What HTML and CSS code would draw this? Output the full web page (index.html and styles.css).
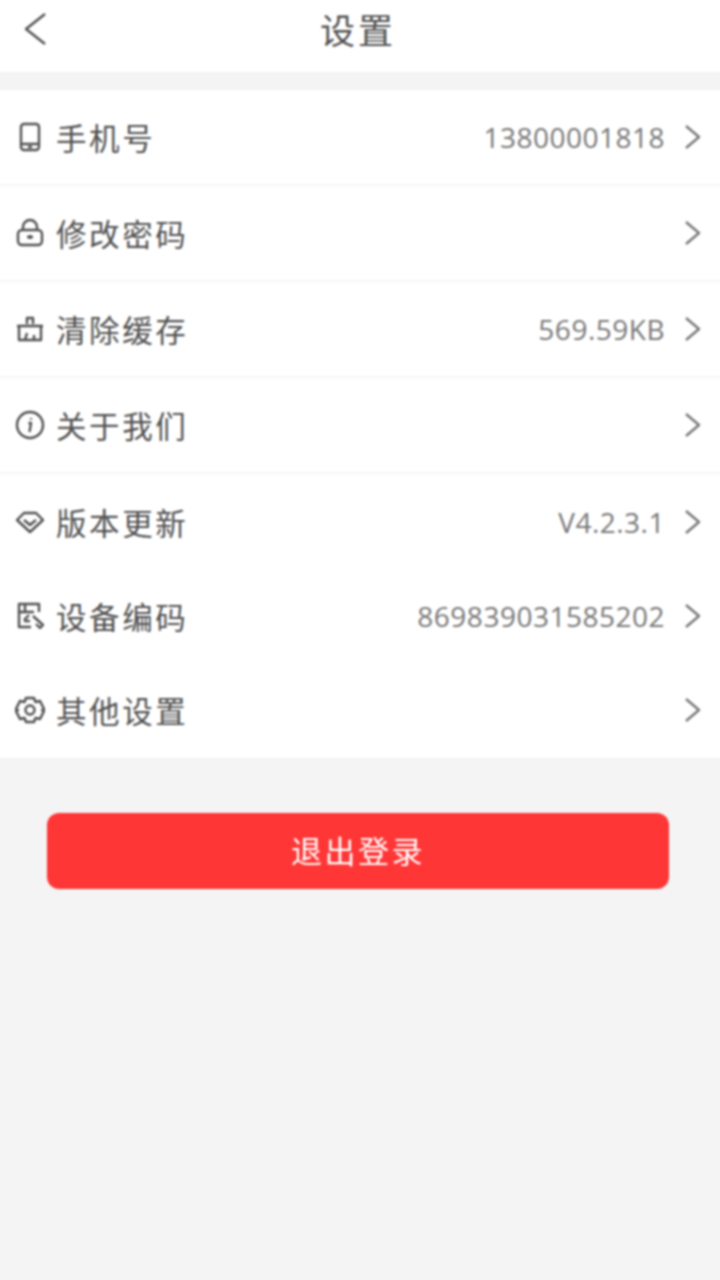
FILE: index.html
```html
<!DOCTYPE html>
<html lang="zh-CN">

<head>
  <meta charset="UTF-8" />
  <meta name="viewport" content="width=device-width, initial-scale=1.0" />
  <title>设置</title>
  <link rel="stylesheet" href="styles.css">
</head>

<body>
  <main class="page">
    <header class="topbar">
      <svg class="back" viewBox="0 0 24 34"><path d="M22 2 L3 17 L22 32" /></svg>
      <h1>设置</h1>
    </header>

    <ul class="menu">
      <li class="row">
        <svg class="icon" viewBox="0 0 30 30"><rect x="6" y="2" width="18" height="26" rx="3" /><path d="M6 22 H24 M13 25 H17" /></svg>
        <span class="label">手机号</span>
        <span class="value">13800001818</span>
        <svg class="arrow" viewBox="0 0 16 26"><path d="M1 2 L14 13 L1 24" /></svg>
      </li>
      <li class="row">
        <svg class="icon" viewBox="0 0 30 30"><rect x="3" y="12" width="24" height="15" rx="4" /><path d="M8 12 V9 A7 7 0 0 1 22 9 V12 M15 17 V21 M12 19 H18" /></svg>
        <span class="label">修改密码</span>
        <svg class="arrow" viewBox="0 0 16 26"><path d="M1 2 L14 13 L1 24" /></svg>
      </li>
      <li class="row">
        <svg class="icon" viewBox="0 0 30 30"><path d="M12 10 V4 H18 V10 M2 12 H28 M4 12 V26 H26 V12 M10 26 L12 19 M19 26 V21" /></svg>
        <span class="label">清除缓存</span>
        <span class="value">569.59KB</span>
        <svg class="arrow" viewBox="0 0 16 26"><path d="M1 2 L14 13 L1 24" /></svg>
      </li>
      <li class="row">
        <svg class="icon" viewBox="0 0 30 30"><circle cx="15" cy="15" r="13" /><path d="M16 8 V9.500 M13.500 13 H16 L14.500 22" /></svg>
        <span class="label">关于我们</span>
        <svg class="arrow" viewBox="0 0 16 26"><path d="M1 2 L14 13 L1 24" /></svg>
      </li>
      <li class="row row-open">
        <svg class="icon" viewBox="0 0 30 30"><path d="M9 6 H21 L28 13 L15 25 L2 13 Z M9 13 L15 18 L21 13" /></svg>
        <span class="label">版本更新</span>
        <span class="value">V4.2.3.1</span>
        <svg class="arrow" viewBox="0 0 16 26"><path d="M1 2 L14 13 L1 24" /></svg>
      </li>
      <li class="row row-short">
        <svg class="icon" viewBox="0 0 30 30"><path d="M24 11 V3 H4 V26 H16 M4 11 H19 M10 3 V11 M9 19 L14 14 M18 15 L28 24 L25 27 L21 23 M9 20 H15" /></svg>
        <span class="label">设备编码</span>
        <span class="value">869839031585202</span>
        <svg class="arrow" viewBox="0 0 16 26"><path d="M1 2 L14 13 L1 24" /></svg>
      </li>
      <li class="row row-short">
        <svg class="icon" viewBox="0 0 30 30"><path d="M11 3 H19 L20.500 7 L25 6 L29 14 L27 15 L29 16 L25 24 L20.500 23 L19 27 H11 L9.500 23 L5 24 L1 16 L3 15 L1 14 L5 6 L9.500 7 Z" /><circle cx="15" cy="15" r="4.500" /></svg>
        <span class="label">其他设置</span>
        <svg class="arrow" viewBox="0 0 16 26"><path d="M1 2 L14 13 L1 24" /></svg>
      </li>
    </ul>

    <button class="logout">退出登录</button>
  </main>
</body>

</html>
```

FILE: styles.css
```css
:root {
  --text: #505050;
  --value: #777777;
  --line: #f7f7f7;
  --page: #f4f4f4;
  --red: #ff3636;
}

* {
  box-sizing: border-box;
}

html,
body {
  overflow: hidden;
}

body {
  margin: 0;
  height: 1280px;
  background: var(--page);
  font-family: "Noto Sans CJK SC", "Noto Sans", sans-serif;
  color: var(--text);
}

/* 4px bleed so the blur does not fade the white bars at the window edge */
.page {
  width: 728px;
  height: 1288px;
  margin: -4px;
  filter: blur(0.8px);
}

.topbar {
  position: relative;
  height: 76px;
  margin-bottom: 18px;
  padding: 4px 0 16px;
  background: #ffffff;
  display: flex;
  justify-content: center;
  align-items: center;
}

.topbar h1 {
  margin: 0 4px 0 0;
  font-size: 35px;
  font-weight: 400;
  letter-spacing: 3px;
}

.back {
  position: absolute;
  left: 27px;
  top: 16px;
  width: 24px;
  height: 34px;
}

.back path,
.arrow path,
.icon path,
.icon rect,
.icon circle {
  fill: none;
  stroke: currentColor;
  stroke-width: 2.400;
  stroke-linejoin: round;
}

.menu {
  list-style: none;
  margin: 0;
  padding: 0;
  background: #ffffff;
}

.row {
  height: 96px;
  padding: 0 23px 0 19px;
  display: flex;
  align-items: center;
  border-bottom: 2px solid var(--line);
}

.row-open {
  border-bottom: none;
}

.row-short {
  height: 94px;
  border-bottom: none;
  padding-bottom: 2px;
}

.icon {
  width: 30px;
  height: 30px;
  margin-right: 11px;
  flex-shrink: 0;
}

.label {
  flex: 1;
  font-size: 30.500px;
  letter-spacing: 2.600px;
}

.value {
  font-family: "Open Sans", "Noto Sans", sans-serif;
  font-size: 28px;
  letter-spacing: 0.5px;
  color: var(--value);
}

.arrow {
  width: 16px;
  height: 26px;
  margin-left: 20px;
  color: #777777;
}

.logout {
  display: block;
  width: 622px;
  height: 76px;
  margin: 55px 0 0 51px;
  padding-bottom: 4px;
  border: none;
  border-radius: 12px;
  background: var(--red);
  color: #ffffff;
  font-family: "Noto Sans CJK SC", "Noto Sans", sans-serif;
  font-size: 31px;
  letter-spacing: 2.500px;
}
```
